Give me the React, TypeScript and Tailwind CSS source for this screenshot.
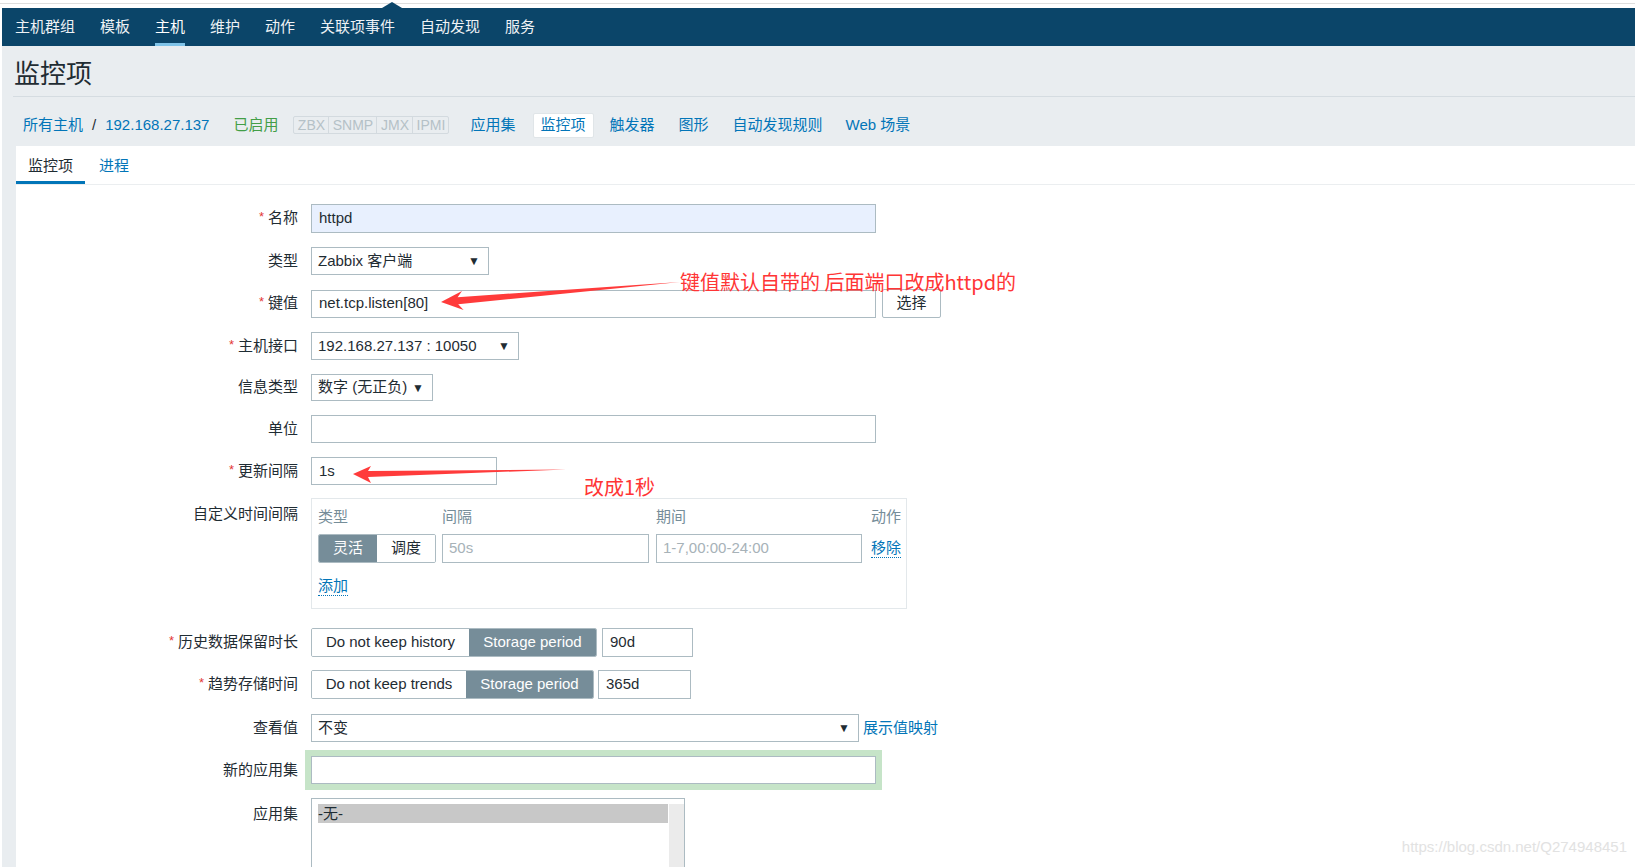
import type { ReactNode } from "react";

const navItems = ["主机群组", "模板", "主机", "维护", "动作", "关联项事件", "自动发现", "服务"];

function Req() {
  return <span className="mr-[4px] align-top text-[13px] text-[#e33734]">*</span>;
}

function Row({
  label,
  required,
  className = "",
  labelTop,
  children,
}: {
  label: string;
  required?: boolean;
  className?: string;
  labelTop?: boolean;
  children: ReactNode;
}) {
  return (
    <div className={`flex gap-[13px] ${labelTop ? "items-start" : "items-center"} ${className}`}>
      <div className={`w-[282px] shrink-0 text-right ${labelTop ? "pt-[5px]" : ""}`}>
        {required && <Req />}
        {label}
      </div>
      <div className="flex items-center">{children}</div>
    </div>
  );
}

function Select({ value, className }: { value: string; className: string }) {
  return (
    <div
      className={`flex items-center justify-between border border-[#acbbc2] bg-white pl-[6px] pr-[8px] ${className}`}
    >
      <span>{value}</span>
      <span className="text-[12px] text-[#1f2c33]">▼</span>
    </div>
  );
}

function Input({ value = "", className }: { value?: string; className: string }) {
  return (
    <div className={`flex items-center border border-[#acbbc2] px-[7px] ${className}`}>
      {value}
    </div>
  );
}

export default function App() {
  return (
    <div className="relative h-[867px] w-full overflow-hidden bg-white text-[15px] text-[#1f2c33] [font-family:'Liberation_Sans','Noto_Sans_CJK_SC',sans-serif]">
      {/* top strip */}
      <div className="relative h-[8px] bg-white pt-[3px]">
        <div className="h-px bg-[#dedede]" />
        <svg className="absolute left-[382px] top-[2px]" width="20" height="6" viewBox="0 0 20 6">
          <polygon points="0,6 10,0 20,6" fill="#0b4569" />
        </svg>
      </div>

      <div className="flex h-[859px] flex-col pl-[2px]">
        {/* main nav */}
        <nav className="flex h-[38px] shrink-0 gap-[25px] bg-[#0b4569] pl-[13px] text-[#eef2f5]">
          {navItems.map((n) => (
            <div
              key={n}
              className={`flex h-full items-center border-b-[3px] pt-[3px] ${
                n === "主机" ? "border-[#7fc3e8] text-white" : "border-transparent"
              }`}
            >
              {n}
            </div>
          ))}
        </nav>

        <div className="flex flex-1 flex-col bg-[#e9edf0]">
          {/* title */}
          <div className="flex h-[50px] items-center pl-[12px] pt-[6px] text-[26px] leading-none">监控项</div>
          <div className="ml-[11px] h-px bg-[#d5dce1]" />

          {/* breadcrumbs */}
          <div className="flex h-[49px] items-center pt-[7px] text-[#0275b8]">
            <span className="ml-[21px]">所有主机</span>
            <span className="ml-[9px] text-[#1f2c33]">/</span>
            <span className="ml-[9px]">192.168.27.137</span>
            <span className="ml-[24px] text-[#429e47]">已启用</span>
            <div className="ml-[15px] flex h-[18px] items-center rounded-[2px] border border-[#d3dadf] text-[14px] leading-none text-[#b5c1c7]">
              <span className="flex h-full w-[34px] items-center justify-center">ZBX</span>
              <span className="flex h-full w-[48px] items-center justify-center border-l border-[#d3dadf]">SNMP</span>
              <span className="flex h-full w-[36px] items-center justify-center border-l border-[#d3dadf]">JMX</span>
              <span className="flex h-full w-[36px] items-center justify-center border-l border-[#d3dadf]">IPMI</span>
            </div>
            <span className="ml-[21px]">应用集</span>
            <span className="ml-[17px] flex h-[25px] items-center rounded-[2px] border border-[#e0e5e8] bg-white px-[7px]">
              监控项
            </span>
            <span className="ml-[16px]">触发器</span>
            <span className="ml-[24px]">图形</span>
            <span className="ml-[24px]">自动发现规则</span>
            <span className="ml-[23px]">Web 场景</span>
          </div>

          {/* white panel */}
          <div className="ml-[14px] flex-1 bg-white">
            <div className="flex h-[39px] border-b border-[#ebeef0]">
              <div className="flex h-[38px] items-center border-b-[3px] border-[#0275b8] px-[12px] pt-[5px]">
                监控项
              </div>
              <div className="flex h-[38px] items-center border-b-[3px] border-transparent pl-[14px] pt-[5px] text-[#0275b8]">
                进程
              </div>
            </div>

            <div className="flex flex-col pt-[19px]">
              <Row label="名称" required>
                <Input value="httpd" className="h-[29px] w-[565px] bg-[#e8f0fe]" />
              </Row>
              <Row label="类型" className="mt-[14px]">
                <Select value="Zabbix 客户端" className="h-[28px] w-[178px]" />
              </Row>
              <Row label="键值" required className="mt-[14px]">
                <Input value="net.tcp.listen[80]" className="h-[28px] w-[565px]" />
                <div className="ml-[6px] flex h-[29px] w-[59px] items-center justify-center rounded-[2px] border border-[#acbbc2] bg-white">
                  选择
                </div>
              </Row>
              <Row label="主机接口" required className="mt-[14px]">
                <Select value="192.168.27.137 : 10050" className="h-[28px] w-[208px]" />
              </Row>
              <Row label="信息类型" className="mt-[14px]">
                <Select value="数字 (无正负)" className="h-[27px] w-[122px] pr-[7px]" />
              </Row>
              <Row label="单位" className="mt-[14px]">
                <Input className="h-[28px] w-[565px]" />
              </Row>
              <Row label="更新间隔" required className="mt-[14px]">
                <Input value="1s" className="h-[28px] w-[186px]" />
              </Row>

              <Row label="自定义时间间隔" labelTop className="mt-[13px]">
                <div className="flex h-[111px] w-[596px] flex-col whitespace-nowrap border border-[#e3e8eb] pl-[6px] pt-[8px]">
                  <div className="flex h-[20px] items-center text-[#768d99]">
                    <span className="w-[124px] shrink-0">类型</span>
                    <span className="w-[214px] shrink-0">间隔</span>
                    <span className="w-[215px] shrink-0">期间</span>
                    <span className="shrink-0">动作</span>
                  </div>
                  <div className="mt-[7px] flex h-[29px] items-center">
                    <div className="flex h-full w-[118px] shrink-0 overflow-hidden rounded-[2px] border border-[#acbbc2]">
                      <span className="flex flex-1 items-center justify-center bg-[#768d99] text-white">灵活</span>
                      <span className="flex flex-1 items-center justify-center bg-white">调度</span>
                    </div>
                    <div className="ml-[6px] flex h-full w-[207px] shrink-0 items-center border border-[#acbbc2] px-[6px] text-[#a7b2b8]">
                      50s
                    </div>
                    <div className="ml-[7px] flex h-full w-[206px] shrink-0 items-center border border-[#acbbc2] px-[6px] text-[#a7b2b8]">
                      1-7,00:00-24:00
                    </div>
                    <span className="ml-[9px] shrink-0 border-b border-dotted border-[#0275b8] leading-[18px] text-[#0275b8]">
                      移除
                    </span>
                  </div>
                  <div className="mt-[14px] flex">
                    <span className="border-b border-dotted border-[#0275b8] leading-[18px] text-[#0275b8]">添加</span>
                  </div>
                </div>
              </Row>

              <Row label="历史数据保留时长" required className="mt-[19px]">
                <div className="flex h-[29px] overflow-hidden rounded-[2px] border border-[#acbbc2]">
                  <span className="flex w-[157px] items-center justify-center bg-white">Do not keep history</span>
                  <span className="flex w-[127px] items-center justify-center bg-[#768d99] text-white">
                    Storage period
                  </span>
                </div>
                <Input value="90d" className="ml-[5px] h-[29px] w-[91px]" />
              </Row>
              <Row label="趋势存储时间" required className="mt-[13px]">
                <div className="flex h-[29px] overflow-hidden rounded-[2px] border border-[#acbbc2]">
                  <span className="flex w-[154px] items-center justify-center bg-white">Do not keep trends</span>
                  <span className="flex w-[127px] items-center justify-center bg-[#768d99] text-white">
                    Storage period
                  </span>
                </div>
                <Input value="365d" className="ml-[4px] h-[29px] w-[93px]" />
              </Row>
              <Row label="查看值" className="mt-[15px]">
                <Select value="不变" className="h-[28px] w-[548px]" />
                <span className="ml-[4px] text-[#0275b8]">展示值映射</span>
              </Row>
              <Row label="新的应用集" className="mt-[14px]">
                <div className="h-[28px] w-[565px] border border-[#acbbc2] bg-white shadow-[0_0_0_6px_#c6e4c8]" />
              </Row>
              <Row label="应用集" labelTop className="mt-[14px]">
                <div className="flex h-[100px] w-[374px] border border-[#acbbc2] bg-white pl-[6px] pt-[5px]">
                  <div className="flex h-[19px] flex-1 items-center bg-[#c8c8c8] leading-none">-无-</div>
                  <div className="ml-px h-full w-[15px] bg-[#ebebeb]" />
                </div>
              </Row>
            </div>
          </div>
        </div>
      </div>

      {/* annotations */}
      <svg className="pointer-events-none absolute left-0 top-0" width="1635" height="867">
        <polygon
          points="441,302 462,291 457.6,297.2 680,282 458.2,304.2 463.6,310"
          fill="#ff3b3b"
        />
        <polygon points="353,474 371,466 368,471 566,469.5 368,477 371,483" fill="#ff3b3b" />
      </svg>
      <div className="pointer-events-none absolute left-[680px] top-[270px] text-[20px] leading-[24px] text-[#ff3535] [font-family:'Noto_Sans_CJK_SC',sans-serif]">
        键值默认自带的 后面端口改成httpd的
      </div>
      <div className="pointer-events-none absolute left-[584px] top-[475px] text-[20px] leading-[24px] text-[#ff3535] [font-family:'Noto_Sans_CJK_SC',sans-serif]">
        改成1秒
      </div>
      <div className="pointer-events-none absolute right-[8px] bottom-[9px] text-[15px] text-[#e2e2e2]">
        https://blog.csdn.net/Q274948451
      </div>
    </div>
  );
}
